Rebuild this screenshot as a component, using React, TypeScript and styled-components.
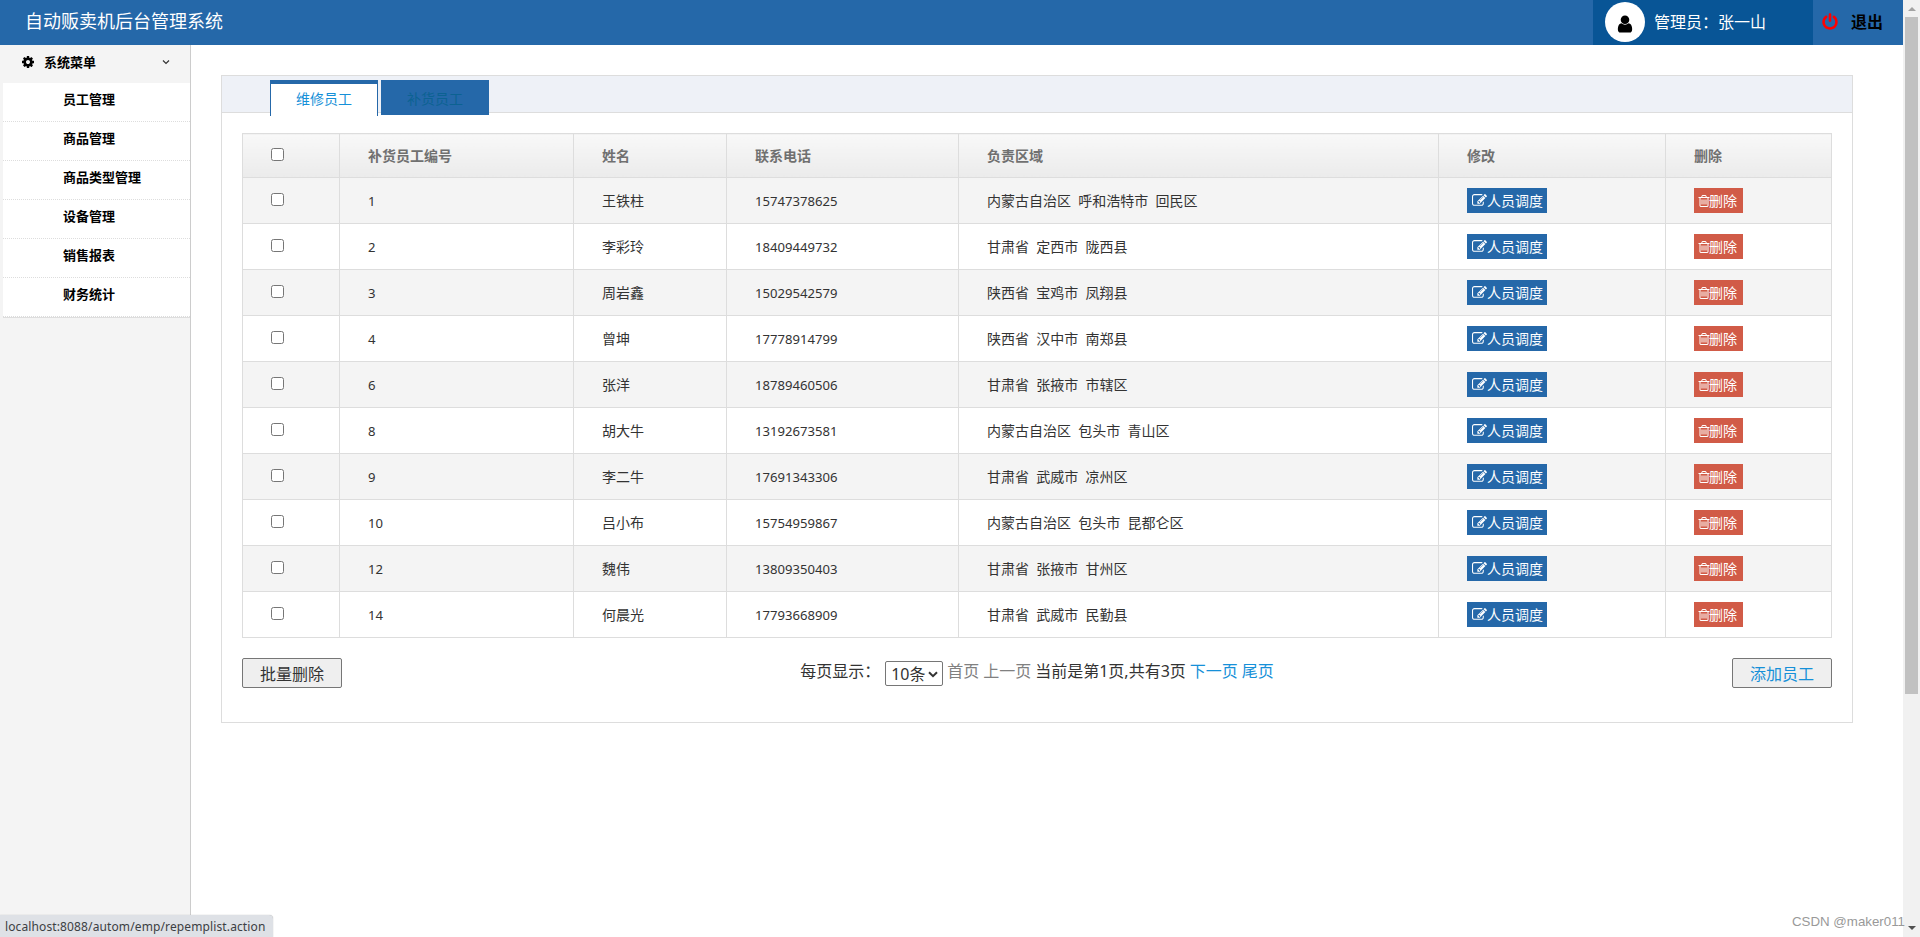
import React from "react";
import styled, { createGlobalStyle } from "styled-components";

const GlobalStyle = createGlobalStyle`
  * { box-sizing: border-box; }
  body {
    margin: 0;
    height: 937px;
    overflow: hidden;
    background: #fff;
    color: #333;
    font-family: "Noto Sans", "Noto Sans CJK SC", sans-serif;
    font-size: 14px;
  }
  ul { list-style: none; margin: 0; padding: 0; }
`;

const ICONS = {
  power:
    "M1664 896q0 156-61 298t-164 245-245 164-298 61-298-61-245-164-164-245-61-298q0-182 80.5-343t226.5-270q43-32 95.5-25t83.5 50q32 42 24.5 94.5t-49.5 84.5q-98 74-151.5 181t-53.5 228q0 104 40.5 198.5t109.5 163.5 163.5 109.5 198.5 40.5 198.5-40.5 163.5-109.5 109.5-163.5 40.5-198.5q0-121-53.5-228t-151.5-181q-42-32-49.5-84.5t24.5-94.5q31-43 84-50t95 25q146 109 226.5 270t80.5 343zm-640-768v640q0 52-38 90t-90 38-90-38-38-90v-640q0-52 38-90t90-38 90 38 38 90z",
  edit:
    "M888 1184l116-116-152-152-116 116v56h96v96h56zm440-720q-16-16-33 1l-350 350q-17 17-1 33t33-1l350-350q17-17 1-33zm80 594v190q0 119-84.5 203.5t-203.5 84.5h-832q-119 0-203.5-84.5t-84.5-203.5v-832q0-119 84.5-203.5t203.5-84.5h832q63 0 117 25 15 7 18 23 3 17-9 29l-49 49q-14 14-32 8-23-6-45-6h-832q-66 0-113 47t-47 113v832q0 66 47 113t113 47h832q66 0 113-47t47-113v-126q0-13 9-22l64-64q15-15 35-7t20 29zm-96-738l288 288-672 672h-288v-288zm444 132l-92 92-288-288 92-92q28-28 68-28t68 28l152 152q28 28 28 68t-28 68z",
  trash:
    "M704 736v576q0 14-9 23t-23 9h-64q-14 0-23-9t-9-23v-576q0-14 9-23t23-9h64q14 0 23 9t9 23zm256 0v576q0 14-9 23t-23 9h-64q-14 0-23-9t-9-23v-576q0-14 9-23t23-9h64q14 0 23 9t9 23zm256 0v576q0 14-9 23t-23 9h-64q-14 0-23-9t-9-23v-576q0-14 9-23t23-9h64q14 0 23 9t9 23zm128 724v-948h-896v948q0 22 7 40.5t14.5 27 10.5 8.5h832q3 0 10.5-8.5t14.5-27 7-40.5zm-672-1076h448l-48-117q-7-9-17-11h-317q-10 2-17 11zm928 32v64q0 14-9 23t-23 9h-96v948q0 83-47 143.5t-113 60.5h-832q-66 0-113-58.5t-47-141.5v-952h-96q-14 0-23-9t-9-23v-64q0-14 9-23t23-9h309l70-167q15-37 54-63t79-26h320q40 0 79 26t54 63l70 167h309q14 0 23 9t9 23z",
  cog:
    "M1152 896q0-106-75-181t-181-75-181 75-75 181 75 181 181 75 181-75 75-181zm512-109v222q0 12-8 23t-20 13l-185 28q-19 54-39 91 35 50 107 138 10 12 10 25t-9 23q-27 37-99 108t-94 71q-12 0-26-9l-138-108q-44 23-91 38-16 136-29 186-7 28-36 28h-222q-14 0-24.5-8.5t-11.5-21.5l-28-184q-49-16-90-37l-141 107q-10 9-25 9-14 0-25-11-126-114-165-168-7-10-7-23 0-12 8-23 15-21 51-66.5t54-70.5q-27-50-41-99l-183-27q-13-2-21-12.5t-8-23.5v-222q0-12 8-23t19-13l186-28q14-46 39-92-40-57-107-138-10-12-10-24 0-10 9-23 26-36 98.5-107.5t94.5-71.5q13 0 26 10l138 107q44-23 91-38 16-136 29-186 7-28 36-28h222q14 0 24.5 8.5t11.5 21.5l28 184q49 16 90 37l142-107q9-9 24-9 13 0 25 10 129 119 165 170 7 8 7 22 0 12-8 23-15 21-51 66.5t-54 70.5q26 50 41 98l183 28q13 2 21 12.5t8 23.5z",
  user:
    "M1536 1399q0 109-62.5 187t-150.5 78h-854q-88 0-150.5-78t-62.5-187q0-85 8.5-160.5t31.5-152 58.5-131 94-89 134.5-34.5q131 128 313 128t313-128q76 0 134.5 34.5t94 89 58.5 131 31.5 152 8.5 160.5zm-256-887q0 159-112.5 271.5t-271.5 112.5-271.5-112.5-112.5-271.5 112.5-271.5 271.5-112.5 271.5 112.5 112.5 271.5z",
};

const Glyph = styled.svg<{ $size: number }>`
  width: ${(p) => p.$size}px;
  height: ${(p) => p.$size}px;
  fill: currentColor;
  flex: none;
`;

function Icon({ name, size }: { name: keyof typeof ICONS; size: number }) {
  return (
    <Glyph $size={size} viewBox="0 0 1792 1792" aria-hidden>
      <path d={ICONS[name]} />
    </Glyph>
  );
}

const Screen = styled.div`
  display: flex;
  width: 1920px;
  height: 937px;
`;

const Page = styled.div`
  width: 1903px;
  display: flex;
  flex-direction: column;
`;

const TopBar = styled.header`
  height: 45px;
  flex: none;
  display: flex;
  background: #2568a9;
`;

const Brand = styled.h1`
  margin: 0;
  padding-left: 25px;
  flex: 1;
  font-size: 18px;
  font-weight: 400;
  line-height: 42px;
  color: #fff;
`;

const Admin = styled.div`
  width: 220px;
  padding: 0 0 1px 12px;
  display: flex;
  align-items: center;
  background: #085596;
  color: #fff;
  font-size: 16px;
  line-height: 43px;
`;

const Avatar = styled.span`
  width: 40px;
  height: 40px;
  margin-right: 9px;
  padding-top: 3px;
  border-radius: 50%;
  background: #fff;
  color: #000;
  display: flex;
  align-items: center;
  justify-content: center;
`;

const Logout = styled.div`
  width: 90px;
  padding: 0 0 1px 8px;
  display: flex;
  align-items: center;
  gap: 12px;
  color: #ff0000;
  line-height: 43px;

  b {
    color: #000;
    font-size: 16px;
    font-weight: 700;
  }
`;

const Body = styled.div`
  flex: 1;
  display: flex;
`;

const Sidebar = styled.aside`
  width: 191px;
  flex: none;
  background: #f4f4f4;
  border-right: 1px solid #ccc;
  font-size: 13px;
  font-weight: 700;
  color: #000;
`;

const MenuTitle = styled.div`
  height: 38px;
  padding: 0 20px 4px 21px;
  display: flex;
  align-items: center;

  span {
    flex: 1;
    margin: -1px 0 0 9px;
  }
`;

const MenuItems = styled.ul`
  margin-left: 3px;
  background: #fff;
  border-bottom: 1px solid #ddd;
`;

const MenuItem = styled.li`
  height: 39px;
  padding-left: 60px;
  line-height: 32px;
  border-bottom: 1px dotted #ddd;
`;

const Main = styled.main`
  flex: 1;
  padding: 30px 50px 0 30px;
`;

const Panel = styled.section`
  height: 648px;
  border: 1px solid #ddd;
`;

const TabBar = styled.div`
  height: 37px;
  padding: 4px 0 0 48px;
  display: flex;
  gap: 3px;
  background: #eef1f7;
  border-bottom: 1px solid #ddd;
`;

const Tab = styled.div<{ $active?: boolean }>`
  width: 108px;
  height: ${(p) => (p.$active ? 36 : 35)}px;
  flex: none;
  text-align: center;
  line-height: ${(p) => (p.$active ? 30 : 38)}px;
  border: solid #2568a9;
  border-width: ${(p) => (p.$active ? "4px 1px 0" : "0")};
  background: ${(p) => (p.$active ? "#fff" : "#2568a9")};
  color: ${(p) => (p.$active ? "#1690d8" : "#0c6292")};
`;

const Content = styled.div`
  padding: 20px;
`;

const Table = styled.table`
  width: 1590px;
  table-layout: fixed;
  border-collapse: collapse;

  th,
  td {
    height: 46px;
    padding: 0 0 0 28px;
    border: 1px solid #ddd;
    text-align: left;
    line-height: 20px;
    white-space: pre;
  }
  th {
    height: 44px;
    color: #707070;
    background: linear-gradient(#f8f8f8, #ebebeb);
  }
  tbody tr:nth-child(odd) {
    background: #f4f4f4;
  }
`;

const Check = styled.input`
  display: block;
  width: 13px;
  height: 13px;
  margin: 0 0 2px;
`;

const Digits = styled.span`
  font-size: 13.1px;
`;

const ActionButton = styled.button<{ $danger?: boolean }>`
  display: flex;
  align-items: center;
  width: ${(p) => (p.$danger ? 49 : 80)}px;
  height: 25px;
  padding: 0 0 0 ${(p) => (p.$danger ? 3 : 5)}px;
  border: 0;
  background: ${(p) => (p.$danger ? "#d15b47" : "#2568a9")};
  color: #fff;
  font: 14px "Noto Sans", "Noto Sans CJK SC", sans-serif;
  line-height: 25px;

  svg {
    margin-right: ${(p) => (p.$danger ? -2 : 0)}px;
  }
`;

const Footer = styled.div`
  margin-top: 20px;
  width: 1590px;
  display: flex;
  align-items: flex-start;
  justify-content: space-between;
  font-size: 16px;
`;

const FooterButton = styled.button<{ $accent?: boolean }>`
  width: 100px;
  height: 30px;
  padding: 2px 0 0;
  border: 1px solid #767676;
  border-radius: 2px;
  background: #efefef;
  color: ${(p) => (p.$accent ? "#1690d8" : "#333")};
  font: 16px "Noto Sans", "Noto Sans CJK SC", sans-serif;
  line-height: 26px;
`;

const Pager = styled.div`
  display: flex;
  gap: 4px;
  line-height: 26px;
`;

const PageLabel = styled.span`
  width: 81px;
`;

const PageLink = styled.span<{ $disabled?: boolean }>`
  color: ${(p) => (p.$disabled ? "#808080" : "#1690d8")};
`;

const PageSize = styled.div`
  width: 58px;
  height: 25px;
  margin-top: 3px;
  padding: 1px 4px 0 5px;
  display: flex;
  align-items: center;
  justify-content: space-between;
  border: 1px solid #767676;
  border-radius: 2px;
  line-height: 22px;
`;

const ScrollTrack = styled.div`
  width: 17px;
  height: 937px;
  padding: 7px 2px 7px 2px;
  display: flex;
  flex-direction: column;
  align-items: center;
  background: #f1f1f1;
`;

const ScrollThumb = styled.div`
  width: 13px;
  height: 677px;
  margin: 6px 0 auto;
  background: #c1c1c1;
`;

const Arrow = styled.div<{ $down?: boolean }>`
  border: 4px solid transparent;
  border-width: ${(p) => (p.$down ? "4px 4px 0" : "0 4px 4px")};
  border-color: ${(p) => (p.$down ? "#505050 transparent" : "transparent transparent #a3a3a3")};
`;

const StatusBubble = styled.div`
  position: absolute;
  left: 0;
  bottom: 0;
  width: 273px;
  height: 22px;
  padding-left: 5px;
  border-top-right-radius: 4px;
  background: #dee1e6;
  box-shadow: 0 0 1px #999;
  color: #3c4043;
  font-size: 12px;
  letter-spacing: 0.12px;
  line-height: 23px;
  white-space: nowrap;
`;

const Watermark = styled.div`
  position: absolute;
  right: 15px;
  top: 912px;
  color: #999;
  font: 13.3px/20px "Liberation Sans", sans-serif;
  white-space: nowrap;
`;

const menu = ["员工管理", "商品管理", "商品类型管理", "设备管理", "销售报表", "财务统计"];
const headings = ["补货员工编号", "姓名", "联系电话", "负责区域", "修改", "删除"];
const columns = [97, 234, 153, 232, 480, 227, 166];

const employees = [
  ["1", "王铁柱", "15747378625", "内蒙古自治区  呼和浩特市  回民区"],
  ["2", "李彩玲", "18409449732", "甘肃省  定西市  陇西县"],
  ["3", "周岩鑫", "15029542579", "陕西省  宝鸡市  凤翔县"],
  ["4", "曾坤", "17778914799", "陕西省  汉中市  南郑县"],
  ["6", "张洋", "18789460506", "甘肃省  张掖市  市辖区"],
  ["8", "胡大牛", "13192673581", "内蒙古自治区  包头市  青山区"],
  ["9", "李二牛", "17691343306", "甘肃省  武威市  凉州区"],
  ["10", "吕小布", "15754959867", "内蒙古自治区  包头市  昆都仑区"],
  ["12", "魏伟", "13809350403", "甘肃省  张掖市  甘州区"],
  ["14", "何晨光", "17793668909", "甘肃省  武威市  民勤县"],
];

export default function App() {
  return (
    <>
      <GlobalStyle />
      <Screen>
        <Page>
          <TopBar>
            <Brand>自动贩卖机后台管理系统</Brand>
            <Admin>
              <Avatar>
                <Icon name="user" size={20} />
              </Avatar>
              管理员：张一山
            </Admin>
            <Logout>
              <Icon name="power" size={18} />
              <b>退出</b>
            </Logout>
          </TopBar>
          <Body>
            <Sidebar>
              <MenuTitle>
                <Icon name="cog" size={14} />
                <span>系统菜单</span>
                <svg width="8" height="6" viewBox="0 0 8 6" fill="none" stroke="#333" strokeWidth="1.2">
                  <path d="M1 1.5L4 4.5L7 1.5" />
                </svg>
              </MenuTitle>
              <MenuItems>
                {menu.map((m) => (
                  <MenuItem key={m}>{m}</MenuItem>
                ))}
              </MenuItems>
            </Sidebar>
            <Main>
              <Panel>
                <TabBar>
                  <Tab $active>维修员工</Tab>
                  <Tab>补货员工</Tab>
                </TabBar>
                <Content>
                  <Table>
                    <colgroup>
                      {columns.map((w, i) => (
                        <col key={i} width={w} />
                      ))}
                    </colgroup>
                    <thead>
                      <tr>
                        <th>
                          <Check type="checkbox" />
                        </th>
                        {headings.map((h) => (
                          <th key={h}>{h}</th>
                        ))}
                      </tr>
                    </thead>
                    <tbody>
                      {employees.map(([id, name, phone, area]) => (
                        <tr key={id}>
                          <td>
                            <Check type="checkbox" />
                          </td>
                          <td>
                            <Digits>{id}</Digits>
                          </td>
                          <td>{name}</td>
                          <td>
                            <Digits>{phone}</Digits>
                          </td>
                          <td>{area}</td>
                          <td>
                            <ActionButton>
                              <Icon name="edit" size={15} />
                              人员调度
                            </ActionButton>
                          </td>
                          <td>
                            <ActionButton $danger>
                              <Icon name="trash" size={14} />
                              删除
                            </ActionButton>
                          </td>
                        </tr>
                      ))}
                    </tbody>
                  </Table>
                  <Footer>
                    <FooterButton>批量删除</FooterButton>
                    <Pager>
                      <PageLabel>每页显示：</PageLabel>
                      <PageSize>
                        10条
                        <svg width="10" height="7" viewBox="0 0 10 7" fill="none" stroke="#333" strokeWidth="2">
                          <path d="M1 1.2L5 5.2L9 1.2" />
                        </svg>
                      </PageSize>
                      <PageLink $disabled>首页</PageLink>
                      <PageLink $disabled>上一页</PageLink>
                      <span>当前是第1页,共有3页</span>
                      <PageLink>下一页</PageLink>
                      <PageLink>尾页</PageLink>
                    </Pager>
                    <FooterButton $accent>添加员工</FooterButton>
                  </Footer>
                </Content>
              </Panel>
            </Main>
          </Body>
        </Page>
        <ScrollTrack>
          <Arrow />
          <ScrollThumb />
          <Arrow $down />
        </ScrollTrack>
      </Screen>
      <StatusBubble>localhost:8088/autom/emp/repemplist.action</StatusBubble>
      <Watermark>CSDN @maker011</Watermark>
    </>
  );
}
